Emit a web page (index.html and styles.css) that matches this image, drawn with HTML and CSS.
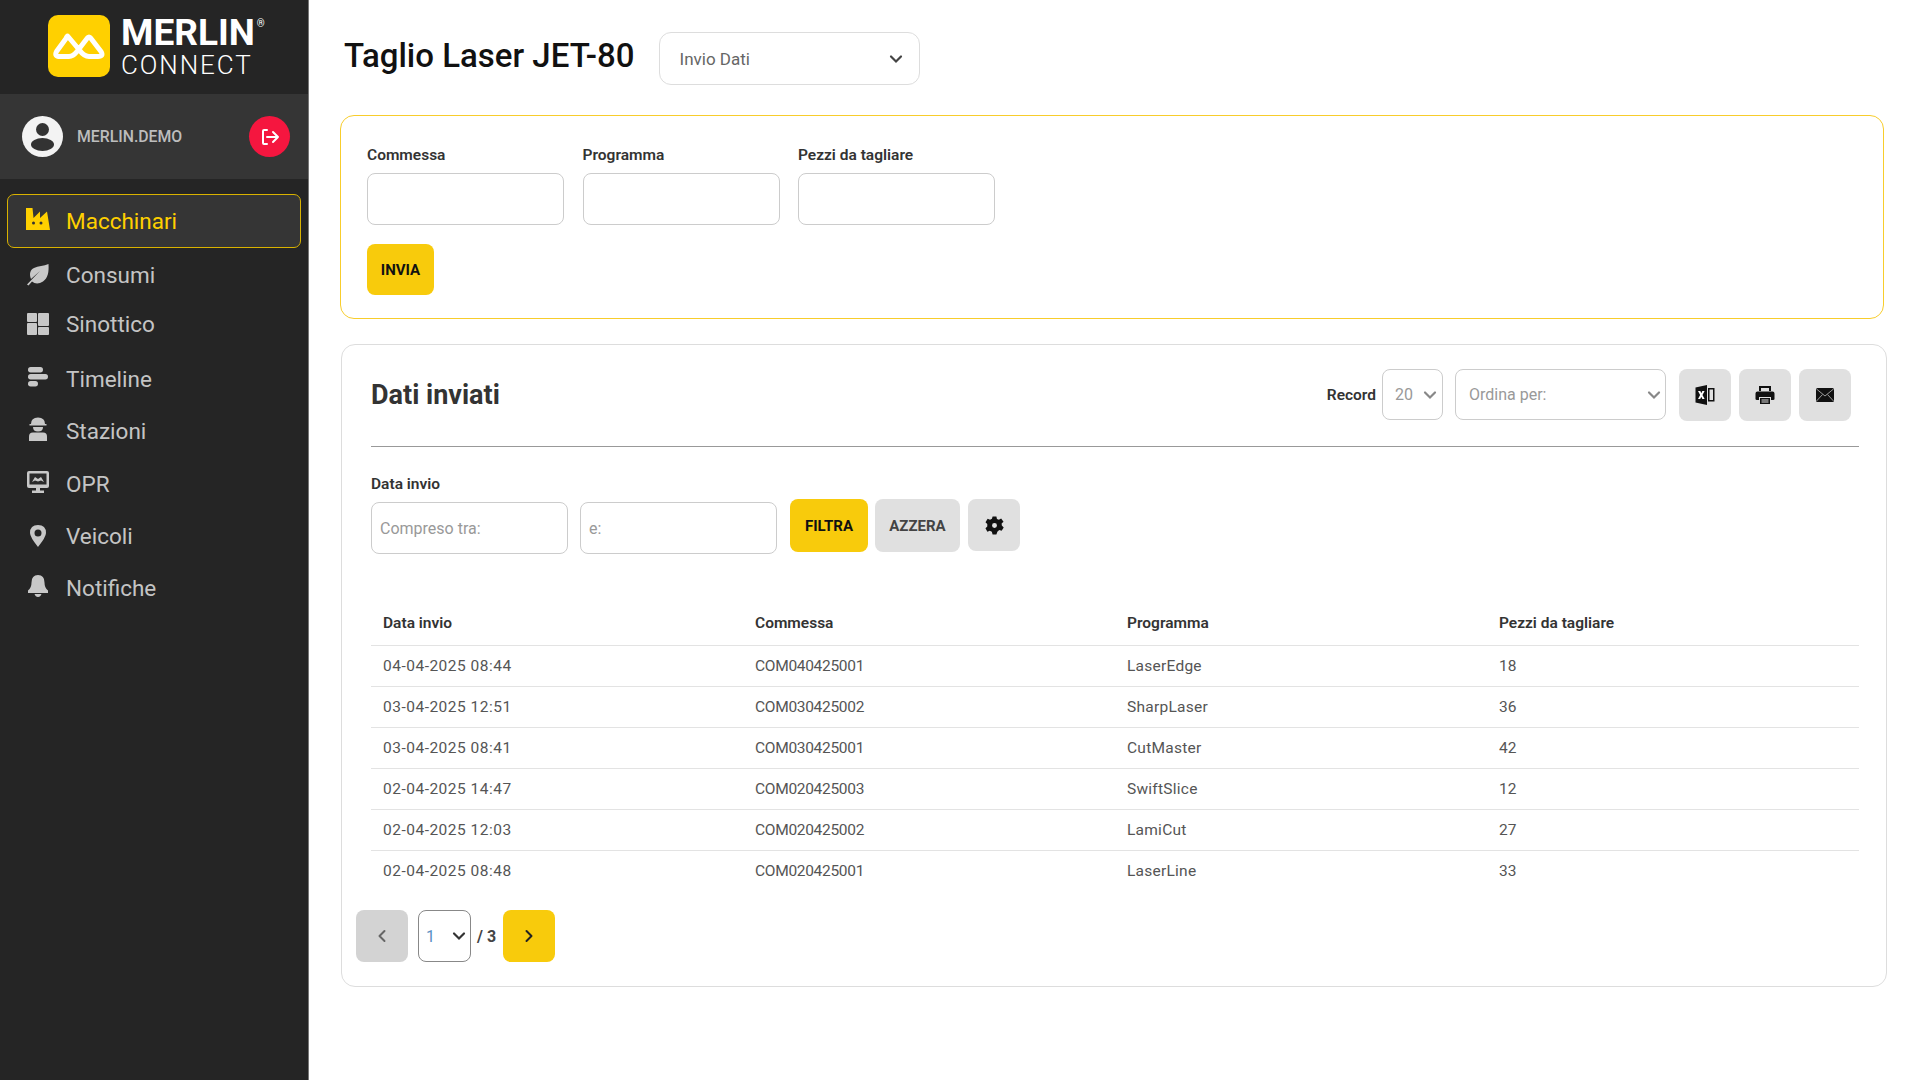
FILE: index.html
```html
<!DOCTYPE html>
<html lang="it">
<head>
<meta charset="utf-8">
<title>Taglio Laser JET-80</title>
<link rel="stylesheet" href="styles.css">
</head>
<body>
<div class="app">
  <aside class="sidebar">
    <div class="brand">
      <svg class="brand-mark" viewBox="0 0 62 62"><rect width="62" height="62" rx="10" fill="#ffd000"/><path d="M20 21.500L31 34.500Q36 41.500 41 41.500L50 41.500Q56 41.500 53 36.500L43 23.500Q41 20.500 39 23.500L29 36.500Q25 41.500 21 41.500L12 41.500Q6 41.500 8.500 36.500L18 23.500Q19 20.500 20 21.500Z" fill="none" stroke="#fff" stroke-width="5" stroke-linejoin="round"/></svg>
      <div class="brand-text">
        <div class="brand-name">MERLIN<sup class="brand-reg">®</sup></div>
        <div class="brand-sub">CONNECT</div>
      </div>
    </div>
    <div class="user">
      <svg class="avatar" viewBox="0 0 41 41"><circle cx="20.500" cy="20.500" r="20.500" fill="#f3f3f3"/><circle cx="20.500" cy="13.500" r="6.500" fill="#333"/><ellipse cx="20.500" cy="28.500" rx="11.500" ry="6.500" fill="#333"/></svg>
      <span class="user-name">MERLIN.DEMO</span>
      <span class="logout"><svg viewBox="0 0 20 20" width="20" height="20" fill="none" stroke="#fff" stroke-width="2" stroke-linecap="round" stroke-linejoin="round"><path d="M7 3H4Q3 3 3 4V16Q3 17 4 17H7"/><path d="M7 10H18M13 5L18 10L13 15"/></svg></span>
    </div>
    <nav class="menu">
      <a class="menu-item active"><svg class="menu-icon icon-up" viewBox="0 0 24 22"><path d="M0 0H6.500L7.500 10L14 3.500V10L21 3.500L24 22H0Z" fill="#ffd000"/><circle cx="7.500" cy="15" r="1.500" fill="#333"/><circle cx="15" cy="15" r="1.500" fill="#333"/></svg>Macchinari</a>
      <a class="menu-item"><svg class="menu-icon" viewBox="0 0 24 22"><path d="M22.500 0C23 8 22 14 17 17.500C13 20 9 20 6 17.500L2.500 21.500L1 20.500L14 7L5 15C3 10 4 6 8 4C12 2 18 2 22.500 0Z" fill="#c8c8c8"/></svg>Consumi</a>
      <a class="menu-item item-tight"><svg class="menu-icon" viewBox="0 0 24 22"><rect x="1" y="0" width="10" height="9" rx="1" fill="#c8c8c8"/><rect x="1" y="10" width="10" height="12" rx="1" fill="#c8c8c8"/><rect x="12" y="0" width="11" height="13" rx="1" fill="#c8c8c8"/><rect x="12" y="14" width="11" height="8" rx="1" fill="#c8c8c8"/></svg>Sinottico</a>
      <a class="menu-item item-wide"><svg class="menu-icon icon-up" viewBox="0 0 24 22"><rect x="2" y="1" width="15" height="5.500" rx="2.700" fill="#c8c8c8"/><rect x="2" y="8" width="20" height="5.500" rx="2.700" fill="#c8c8c8"/><rect x="2" y="15" width="10" height="5.500" rx="2.700" fill="#c8c8c8"/></svg>Timeline</a>
      <a class="menu-item"><svg class="menu-icon menu-icon-tall icon-up" viewBox="0 0 24 24"><path d="M5 7Q5 0.500 12 0.500Q19 0.500 19 7H20.500V8.500H3.500V7Z" fill="#c8c8c8"/><path d="M7 10H17Q17 14.500 12 14.500Q7 14.500 7 10Z" fill="#c8c8c8"/><path d="M3 24V19.500Q3 15.500 7 15.500H17Q21 15.500 21 19.500V24Z" fill="#c8c8c8"/></svg>Stazioni</a>
      <a class="menu-item item-roomy"><svg class="menu-icon icon-up" viewBox="0 0 24 22"><path d="M3 0H21Q23 0 23 2V15Q23 17 21 17H3Q1 17 1 15V2Q1 0 3 0Z" fill="#c8c8c8"/><rect x="3.500" y="2.500" width="17" height="11" fill="#2a2a2a"/><path d="M6 11L9 6L12 8L15 6L18 11L15 9.500L12 10.500L9 9.500Z" fill="#c8c8c8"/><path d="M10 17H14V19.500H18V22H6V19.500H10Z" fill="#c8c8c8"/></svg>OPR</a>
      <a class="menu-item"><svg class="menu-icon" viewBox="0 0 24 22"><path fill-rule="evenodd" d="M12 0Q20 0 20 8Q20 12 12 22Q4 12 4 8Q4 0 12 0ZM12 4.500A3.500 3.500 0 1 0 12 11.500A3.500 3.500 0 1 0 12 4.500Z" fill="#c8c8c8"/></svg>Veicoli</a>
      <a class="menu-item"><svg class="menu-icon icon-up" viewBox="0 0 24 22"><path d="M12 0Q18.500 0 18.500 7.500Q18.500 13 22 15.500V18H2V15.500Q5.500 13 5.500 7.500Q5.500 0 12 0Z" fill="#c8c8c8"/><path d="M8.500 19H15.500Q14.500 22 12 22Q9.500 22 8.500 19Z" fill="#c8c8c8"/></svg>Notifiche</a>
    </nav>
  </aside>

  <main class="main">
    <header class="page-head">
      <h1 class="page-title">Taglio Laser JET-80</h1>
      <select class="select select-view"><option>Invio Dati</option></select>
    </header>

    <section class="card card-form">
      <div class="form-row">
        <label class="field"><span class="label">Commessa</span><input class="input input-form" type="text"></label>
        <label class="field"><span class="label">Programma</span><input class="input input-form" type="text"></label>
        <label class="field"><span class="label">Pezzi da tagliare</span><input class="input input-form" type="text"></label>
      </div>
      <button class="btn btn-yellow btn-send">INVIA</button>
    </section>

    <section class="card card-data">
      <div class="toolbar">
        <h2 class="card-title">Dati inviati</h2>
        <div class="tools">
          <span class="label">Record</span>
          <select class="select select-record"><option>20</option></select>
          <select class="select select-order"><option>Ordina per:</option></select>
          <button class="btn btn-gray btn-icon"><svg viewBox="0 0 20 20" width="20" height="20"><path d="M0.500 2.500L12 0V20L0.500 17.500Z" fill="#111"/><path d="M13 3H19.500V16.500H13Z" fill="#111"/><path d="M14.500 4.500H18V15H14.500Z" fill="#e0e0e0"/><path d="M3 6H5.300L6.300 8.300L7.400 6H9.600L7.500 10L9.600 14H7.400L6.300 11.700L5.200 14H3L5.100 10Z" fill="#fff"/></svg></button>
          <button class="btn btn-gray btn-icon"><svg viewBox="0 0 20 20" width="20" height="20"><path d="M4 1H16V6H14V3H6V6H4Z" fill="#111"/><path d="M2.500 6.500H17.500Q19.500 6.500 19.500 8.500V14Q19.500 15 18 15H16V12H4V15H2Q0.500 15 0.500 14V8.500Q0.500 6.500 2.500 6.500Z" fill="#111"/><path d="M5 13H15V19H5ZM6.500 14.500V15.500H13.500V14.500ZM6.500 16.500V17.500H13.500V16.500Z" fill="#111" fill-rule="evenodd"/></svg></button>
          <button class="btn btn-gray btn-icon"><svg viewBox="0 0 20 20" width="20" height="20"><rect x="1" y="3" width="18" height="14" rx="1.500" fill="#111"/><path d="M1.500 4L10 11L18.500 4M1.500 16L7.500 9.500M18.500 16L12.500 9.500" fill="none" stroke="#999" stroke-width="1"/></svg></button>
        </div>
      </div>

      <div class="filter">
        <span class="label">Data invio</span>
        <div class="filter-row">
          <input class="input input-filter" type="text" placeholder="Compreso tra:">
          <input class="input input-filter" type="text" placeholder="e:">
          <button class="btn btn-yellow btn-filter">FILTRA</button>
          <button class="btn btn-gray btn-reset">AZZERA</button>
          <button class="btn btn-gray btn-gear"><svg viewBox="0 0 20 20" width="19" height="19"><path fill-rule="evenodd" d="M8 0.500H12L12.600 3.200L14.600 4L17 2.600L19.500 6L17.500 8L17.700 10L19.700 12L17.500 15.500L15 14.800L13 16.500L12 19.500H8L7.200 16.700L5 15.500L2.500 16.500L0.500 13L2.400 11L2.400 8.500L0.500 6.500L2.800 3L5.300 4L7.300 3ZM10 7.400A2.600 2.600 0 1 0 10 12.600A2.600 2.600 0 1 0 10 7.400Z" fill="#111"/></svg></button>
        </div>
      </div>

      <table class="table">
        <thead>
          <tr><th>Data invio</th><th>Commessa</th><th>Programma</th><th>Pezzi da tagliare</th></tr>
        </thead>
        <tbody>
          <tr><td>04-04-2025 08:44</td><td>COM040425001</td><td>LaserEdge</td><td>18</td></tr>
          <tr><td>03-04-2025 12:51</td><td>COM030425002</td><td>SharpLaser</td><td>36</td></tr>
          <tr><td>03-04-2025 08:41</td><td>COM030425001</td><td>CutMaster</td><td>42</td></tr>
          <tr><td>02-04-2025 14:47</td><td>COM020425003</td><td>SwiftSlice</td><td>12</td></tr>
          <tr><td>02-04-2025 12:03</td><td>COM020425002</td><td>LamiCut</td><td>27</td></tr>
          <tr><td>02-04-2025 08:48</td><td>COM020425001</td><td>LaserLine</td><td>33</td></tr>
        </tbody>
      </table>

      <div class="pager">
        <button class="btn btn-prev"><svg viewBox="0 0 14 14" width="14" height="14" fill="none" stroke="#666" stroke-width="2" stroke-linecap="round" stroke-linejoin="round"><path d="M9.500 2L4.500 7L9.500 12"/></svg></button>
        <select class="select select-page"><option>1</option></select>
        <span class="pager-total">/ 3</span>
        <button class="btn btn-yellow btn-next"><svg viewBox="0 0 14 14" width="14" height="14" fill="none" stroke="#222" stroke-width="2" stroke-linecap="round" stroke-linejoin="round"><path d="M4.500 2L9.500 7L4.500 12"/></svg></button>
      </div>
    </section>
  </main>
</div>
</body>
</html>
```

FILE: styles.css
```css
* { box-sizing: border-box; }
html, body { margin: 0; height: 100%; }
body { font-family: "Roboto", "Liberation Sans", sans-serif; color: #333; background: #fff; }

.app { display: flex; min-height: 1080px; height: 1080px; overflow: hidden; }

/* Sidebar */
.sidebar { width: 309px; flex: none; background: #252525; border-right: 1px solid #777; }
.brand { height: 94px; display: flex; align-items: flex-start; padding: 15px 0 0 48px; gap: 11px; }
.brand-mark { width: 62px; height: 62px; flex: none; }
.brand-text { color: #fff; }
.brand-name { font-weight: 700; font-size: 37px; line-height: 36px; display: flex; }
.brand-reg { font-size: 10px; line-height: 12px; font-weight: 500; margin: 3px 0 0 2px; }
.brand-sub { font-weight: 300; font-size: 26px; line-height: 26px; letter-spacing: 1.900px; margin-top: 1px; }

.user { height: 85px; background: #353535; display: flex; align-items: center; padding: 0 18px 0 22px; }
.avatar { width: 41px; height: 41px; flex: none; }
.user-name { margin-left: 14px; font-size: 15.800px; color: #bdbdbd; font-weight: 500; flex: 1; }
.logout { width: 41px; height: 41px; border-radius: 50%; background: #f5163f; display: flex; align-items: center; justify-content: center; }

.menu { padding: 15px 7px 0; }
.menu-item { display: flex; align-items: center; height: 44px; margin-top: 8px; padding-left: 18px; color: #c4c4c4; font-size: 22.500px; gap: 16px; border: 1px solid transparent; }
.menu-icon { width: 24px; height: 22px; flex: none; }
.menu-icon-tall { height: 24px; }
.icon-up { margin-bottom: 4px; }
.menu-item.active { height: 54px; margin-top: 0; margin-bottom: -3px; padding-left: 18px; color: #ffd000; background: #353535; border-color: #d9b200; border-radius: 7px; }
.menu-item.item-tight { margin-top: 5px; }
.menu-item.item-wide { margin-top: 11px; }
.menu-item.item-roomy { margin-top: 9px; }

/* Main */
.main { flex: 1; min-width: 0; padding: 32px 33px 0 31px; }
.page-head { display: flex; align-items: center; gap: 24px; padding-left: 4px; }
.page-title { margin: -5px 0 0; font-size: 33px; font-weight: 500; color: #111; line-height: 40px; white-space: nowrap; }

.select { font-family: inherit; font-size: 16px; color: #999; background-color: #fff; border: 1px solid #ccc; border-radius: 8px; height: 51px; appearance: none; background-repeat: no-repeat; background-image: url("data:image/svg+xml,%3Csvg xmlns='http://www.w3.org/2000/svg' width='14' height='14' viewBox='0 0 14 14'%3E%3Cpath d='M2 4.500L7 9.500L12 4.500' fill='none' stroke='%23888' stroke-width='2.200' stroke-linecap='round'/%3E%3C/svg%3E"); }
.select-view { width: 261px; height: 53px; padding: 0 20px; color: #666; font-size: 17px; border-color: #ddd; border-radius: 12px; background-position: right 16px center; background-image: url("data:image/svg+xml,%3Csvg xmlns='http://www.w3.org/2000/svg' width='14' height='14' viewBox='0 0 14 14'%3E%3Cpath d='M2 4.500L7 9.500L12 4.500' fill='none' stroke='%23444' stroke-width='2.200' stroke-linecap='round'/%3E%3C/svg%3E"); }
.select-record { width: 61px; padding: 0 0 0 12px; background-position: right 5px center; }
.select-order { width: 211px; margin-left: 12px; padding: 0 0 0 13px; background-position: right 4px center; }
.select-page { width: 53px; height: 52px; padding: 0 0 0 7px; color: #5a8fc4; border-color: #888; background-position: right 4px center; background-image: url("data:image/svg+xml,%3Csvg xmlns='http://www.w3.org/2000/svg' width='14' height='14' viewBox='0 0 14 14'%3E%3Cpath d='M2 4.500L7 9.500L12 4.500' fill='none' stroke='%23333' stroke-width='2.200' stroke-linecap='round'/%3E%3C/svg%3E"); }

.card { border: 1px solid #ddd; border-radius: 14px; background: #fff; }
.card-form { margin: 30px 3px 0 0; height: 204px; padding: 29px 26px 0; border-color: #f8cd2c; }
.form-row { display: flex; gap: 18.500px; }
.field { display: flex; flex-direction: column; gap: 8px; }
.label { font-size: 15.500px; font-weight: 600; line-height: 20px; color: #333; }

.input { font-family: inherit; font-size: 16px; color: #333; background: #fff; border: 1px solid #ccc; border-radius: 8px; padding: 0 8px; }
.input::placeholder { color: #999; }
.input-form { width: 197px; height: 52px; }
.input-filter { width: 197px; height: 52px; margin-top: 3px; }

.btn { font-family: inherit; border: 0; border-radius: 8px; cursor: pointer; font-size: 15px; font-weight: 700; display: inline-flex; align-items: center; justify-content: center; padding: 0; }
.btn-yellow { background: #f8cb0c; color: #111; }
.btn-gray { background: #e0e0e0; color: #444; }
.btn-send { width: 67px; height: 51px; margin-top: 19px; }

.card-data { margin: 25px 0 0 1px; padding: 0 27px 24px 29px; }
.toolbar { display: flex; align-items: flex-start; justify-content: space-between; padding: 24px 8px 25px 0; border-bottom: 1px solid #999; }
.card-title { margin: 0; font-size: 27px; font-weight: 700; color: #333; line-height: 52px; }
.tools { display: flex; align-items: flex-start; }
.tools .label { margin-right: 6px; line-height: 52px; }
.btn-icon { width: 52px; height: 52px; margin-left: 8px; }
.btn-icon:first-of-type { margin-left: 13px; }

.filter { margin-top: 27px; }
.filter-row { display: flex; align-items: flex-start; margin-top: 5px; }
.input-filter + .input-filter { margin-left: 12px; }
.btn-filter { width: 78px; height: 53px; margin-left: 13px; }
.btn-reset { width: 85px; height: 53px; margin-left: 7px; }
.btn-gear { width: 52px; height: 52px; margin-left: 8px; }

.table { width: 100%; border-collapse: collapse; table-layout: fixed; margin-top: 48px; }
.table th { height: 43px; padding: 0 12px; text-align: left; font-size: 15.500px; font-weight: 600; color: #333; border-bottom: 1px solid #e3e3e3; }
.table td { height: 41px; padding: 0 12px; font-size: 15.500px; color: #555; border-bottom: 1px solid #e3e3e3; }
.table td:nth-child(1) { letter-spacing: 0.500px; }
.table td:nth-child(2) { letter-spacing: -0.300px; }
.table td:nth-child(3) { letter-spacing: 0.250px; }
.table tr:last-child td { border-bottom: 0; }

.pager { display: flex; align-items: center; margin: 19px 0 0 -15px; }
.btn-prev { width: 52px; height: 52px; background: #d3d3d3; margin-right: 10px; }
.btn-next { width: 52px; height: 52px; margin-left: 7px; }
.pager-total { margin-left: 6px; font-size: 16px; font-weight: 700; color: #444; }
```
